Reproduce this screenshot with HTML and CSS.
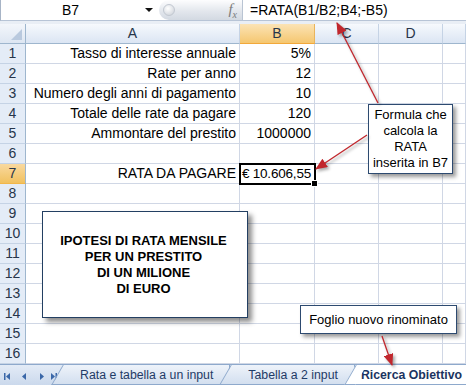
FILE: index.html
```html
<!DOCTYPE html>
<html>
<head>
<meta charset="UTF-8">
<title>Ricerca Obiettivo</title>
<meta name="viewport" content="width=device-width, initial-scale=1.0">
<link rel="stylesheet" href="styles.css">
</head>
<body>
<div class="finestra">

    <div class="barraFormula">
        <div class="casellaNome"><span class="nome">B7</span><span class="tendina"></span></div>
        <div class="divisore"><span class="pomello"></span><span class="fx">f<sub>x</sub></span></div>
        <div class="formula">=RATA(B1/B2;B4;-B5)</div>
    </div>

    <div class="foglio">
        <div class="riga intestazione">
            <div class="angolo"></div>
            <div class="col">A</div>
            <div class="col selezionata">B</div>
            <div class="col">C</div>
            <div class="col">D</div>
            <div class="col"></div>
        </div>
        <div class="riga">
            <div class="num">1</div>
            <div class="cella">Tasso di interesse annuale</div>
            <div class="cella">5%</div>
            <div class="cella"></div><div class="cella"></div><div class="cella"></div>
        </div>
        <div class="riga">
            <div class="num">2</div>
            <div class="cella">Rate per anno</div>
            <div class="cella">12</div>
            <div class="cella"></div><div class="cella"></div><div class="cella"></div>
        </div>
        <div class="riga">
            <div class="num">3</div>
            <div class="cella">Numero degli anni di pagamento</div>
            <div class="cella">10</div>
            <div class="cella"></div><div class="cella"></div><div class="cella"></div>
        </div>
        <div class="riga">
            <div class="num">4</div>
            <div class="cella">Totale delle rate da pagare</div>
            <div class="cella">120</div>
            <div class="cella"></div><div class="cella"></div><div class="cella"></div>
        </div>
        <div class="riga">
            <div class="num">5</div>
            <div class="cella">Ammontare del prestito</div>
            <div class="cella">1000000</div>
            <div class="cella"></div><div class="cella"></div><div class="cella"></div>
        </div>
        <div class="riga">
            <div class="num">6</div>
            <div class="cella"></div><div class="cella"></div><div class="cella"></div><div class="cella"></div><div class="cella"></div>
        </div>
        <div class="riga">
            <div class="num selezionata">7</div>
            <div class="cella">RATA DA PAGARE</div>
            <div class="cella attiva">&euro; 10.606,55</div>
            <div class="cella"></div><div class="cella"></div><div class="cella"></div>
        </div>
        <div class="riga"><div class="num">8</div><div class="cella"></div><div class="cella"></div><div class="cella"></div><div class="cella"></div><div class="cella"></div></div>
        <div class="riga"><div class="num">9</div><div class="cella"></div><div class="cella"></div><div class="cella"></div><div class="cella"></div><div class="cella"></div></div>
        <div class="riga"><div class="num">10</div><div class="cella"></div><div class="cella"></div><div class="cella"></div><div class="cella"></div><div class="cella"></div></div>
        <div class="riga"><div class="num">11</div><div class="cella"></div><div class="cella"></div><div class="cella"></div><div class="cella"></div><div class="cella"></div></div>
        <div class="riga"><div class="num">12</div><div class="cella"></div><div class="cella"></div><div class="cella"></div><div class="cella"></div><div class="cella"></div></div>
        <div class="riga"><div class="num">13</div><div class="cella"></div><div class="cella"></div><div class="cella"></div><div class="cella"></div><div class="cella"></div></div>
        <div class="riga"><div class="num">14</div><div class="cella"></div><div class="cella"></div><div class="cella"></div><div class="cella"></div><div class="cella"></div></div>
        <div class="riga"><div class="num">15</div><div class="cella"></div><div class="cella"></div><div class="cella"></div><div class="cella"></div><div class="cella"></div></div>
        <div class="riga"><div class="num">16</div><div class="cella"></div><div class="cella"></div><div class="cella"></div><div class="cella"></div><div class="cella"></div></div>
    </div>

    <div class="schede">
        <div class="navigazione">
            <svg width="60" height="20" viewBox="0 0 60 20">
                <g fill="#3a67a8">
                    <rect x="4" y="8" width="1.5" height="7"/>
                    <path d="M6 11.5 L10 8 L10 15 Z"/>
                    <path d="M22 11.5 L26 8 L26 15 Z"/>
                    <path d="M40 8 L44 11.5 L40 15 Z"/>
                    <path d="M51 8 L55 11.5 L51 15 Z"/>
                    <rect x="55.5" y="8" width="1.5" height="7"/>
                </g>
            </svg>
        </div>
        <div class="scheda">Rata e tabella a un input</div>
        <div class="scheda">Tabella a 2 input</div>
        <div class="scheda corrente">Ricerca Obiettivo</div>
    </div>

    <!-- forme disegnate sopra il foglio -->
    <div class="casella">IPOTESI DI RATA MENSILE<br>PER UN PRESTITO<br>DI UN MILIONE<br>DI EURO</div>
    <div class="nota notaFormula">Formula che<br>calcola la<br>RATA<br>inserita in B7</div>
    <div class="nota notaFoglio">Foglio nuovo rinominato</div>

    <svg class="frecce" width="466" height="385" viewBox="0 0 466 385">
        <defs>
            <marker id="punta" markerWidth="12" markerHeight="10" refX="11" refY="5" orient="auto" markerUnits="userSpaceOnUse">
                <path d="M0 0 L12 5 L0 10 Z" fill="#c1272d"/>
            </marker>
        </defs>
        <g stroke="#c1272d" stroke-width="1.3" fill="none">
            <line x1="378" y1="103" x2="337" y2="23" marker-end="url(#punta)"/>
            <line x1="367" y1="135" x2="316" y2="169" marker-end="url(#punta)"/>
            <line x1="382" y1="336" x2="392" y2="365" marker-end="url(#punta)"/>
        </g>
    </svg>

</div>
</body>
</html>
```

FILE: styles.css
```css
body {
    margin: 0;
    background: #fff;
    font-family: "Liberation Sans", Arial, sans-serif;
}

.finestra {
    position: relative;
    width: 466px;
    height: 385px;
    overflow: hidden;
}

/* barra della formula */
.barraFormula {
    display: flex;
    height: 21px;
    box-sizing: border-box;
    border-left: 1px solid #a7b4c6;
    border-bottom: 1px solid #b7c4d6;
    font-size: 14px;
}
.casellaNome {
    width: 158px;
    display: flex;
    align-items: center;
}
.casellaNome .nome {
    padding-left: 61px;
    flex: 1;
}
.tendina {
    width: 0;
    height: 0;
    border-left: 4px solid transparent;
    border-right: 4px solid transparent;
    border-top: 4px solid #111;
    margin-right: 6px;
}
.divisore {
    width: 84px;
    display: flex;
    align-items: center;
    justify-content: space-between;
    border-radius: 10px 0 0 10px;
    background: linear-gradient(#fdfdfe, #e3e7ed 55%, #d3d9e2);
    border-right: 1px solid #b9c4d3;
    box-sizing: border-box;
    padding: 0 5px 0 4px;
}
.pomello {
    width: 10px;
    height: 10px;
    border-radius: 50%;
    background: radial-gradient(circle at 40% 35%, #ffffff, #c9ced6);
    border: 1px solid #c2c8d1;
}
.fx {
    font-family: "Liberation Serif", serif;
    font-style: italic;
    font-size: 15px;
    color: #7c7c7c;
}
.fx sub {
    font-size: 10px;
}
.formula {
    flex: 1;
    padding-left: 7px;
    line-height: 20px;
}

/* griglia del foglio */
.foglio {
    padding-top: 3px;
    background: #e9eef5;
}
.riga {
    display: grid;
    grid-template-columns: 26px 214px 75px 64px 64px 1fr;
    height: 20px;
    font-size: 14px;
    line-height: 19px;
    background: #fff;
}
.cella {
    box-sizing: border-box;
    border-right: 1px solid #d0d7e5;
    border-bottom: 1px solid #d0d7e5;
    text-align: right;
    padding-right: 3px;
    white-space: nowrap;
}
.num {
    box-sizing: border-box;
    background: #e4ecf7;
    border-right: 1px solid #9eb6ce;
    border-bottom: 1px solid #c5d3e5;
    text-align: center;
    color: #27354a;
}
.num.selezionata {
    background: linear-gradient(#f9d99f, #f1c15f);
    border-bottom-color: #f2b74a;
}
.intestazione {
    background: transparent;
}
.angolo {
    box-sizing: border-box;
    position: relative;
    background: linear-gradient(#f3f6fb, #dde6f2);
    border-right: 1px solid #9eb6ce;
    border-bottom: 1px solid #9eb6ce;
}
.angolo::after {
    content: "";
    position: absolute;
    right: 3px;
    bottom: 3px;
    border-left: 11px solid transparent;
    border-bottom: 11px solid #b9c9de;
}
.col {
    box-sizing: border-box;
    background: linear-gradient(#f6f9fd, #dbe5f3);
    border-right: 1px solid #c5d3e5;
    border-bottom: 1px solid #9eb6ce;
    text-align: center;
    color: #27354a;
}
.col.selezionata {
    background: linear-gradient(#fbe3b5, #f5c770);
    border-bottom-color: #f2a83a;
    border-right-color: #e9b45c;
}
.cella.attiva {
    position: relative;
    outline: 2px solid #000;
    outline-offset: -1px;
    z-index: 1;
    font-size: 13.5px;
    letter-spacing: -0.2px;
}
.cella.attiva::after {
    content: "";
    position: absolute;
    right: -4px;
    bottom: -4px;
    width: 5px;
    height: 5px;
    background: #000;
    border: 1px solid #fff;
}

/* schede dei fogli */
.schede {
    display: flex;
    height: 21px;
    box-sizing: border-box;
    border-top: 1px solid #8ea9cc;
    background: linear-gradient(#e3ebf6, #cbd9ec);
    font-size: 12.3px;
    color: #1f3b66;
    white-space: nowrap;
}
.navigazione {
    width: 62px;
    flex-shrink: 0;
}
.scheda {
    position: relative;
    flex-shrink: 0;
    padding: 1px 16px 0 18px;
    line-height: 19px;
    background: linear-gradient(#eef3fa, #d3dfef);
    border-right: 1px solid #8ea9cc;
    border-bottom: 1px solid #8ea9cc;
}
.scheda::before {
    content: "";
    position: absolute;
    top: 0;
    bottom: -1px;
    left: -5px;
    width: 10px;
    background: linear-gradient(#eef3fa, #d3dfef);
    border-left: 1px solid #8ea9cc;
    border-bottom: 1px solid #8ea9cc;
    transform: skewX(-30deg);
}
.scheda.corrente {
    flex: 1;
    flex-shrink: 1;
    background: #fff;
    font-weight: bold;
    color: #1b3461;
    padding: 1px 0 0 6px;
    border-right: none;
}
.scheda.corrente::before {
    background: #fff;
}

/* forme sovrapposte */
.casella {
    position: absolute;
    left: 42px;
    top: 211px;
    width: 206px;
    height: 107px;
    box-sizing: border-box;
    border: 1.5px solid #233f62;
    background: #fff;
    box-shadow: 4px 4px 5px rgba(0, 0, 0, 0.45);
    display: flex;
    align-items: center;
    justify-content: center;
    text-align: center;
    font-weight: bold;
    font-size: 13px;
    line-height: 16px;
    padding-right: 3px;
    padding-top: 1px;
    z-index: 2;
}
.nota {
    position: absolute;
    box-sizing: border-box;
    border: 1px solid #2d4a70;
    background: #fff;
    box-shadow: 3px 3px 4px rgba(0, 0, 0, 0.4);
    font-size: 13px;
    line-height: 16px;
    text-align: center;
    display: flex;
    align-items: center;
    justify-content: center;
    z-index: 2;
}
.notaFormula {
    left: 368px;
    top: 104px;
    width: 85px;
    height: 70px;
}
.notaFoglio {
    left: 300px;
    top: 305px;
    width: 157px;
    height: 29px;
}
.frecce {
    position: absolute;
    left: 0;
    top: 0;
    z-index: 3;
    filter: drop-shadow(2px 2px 1.5px rgba(0, 0, 0, 0.35));
}
```
